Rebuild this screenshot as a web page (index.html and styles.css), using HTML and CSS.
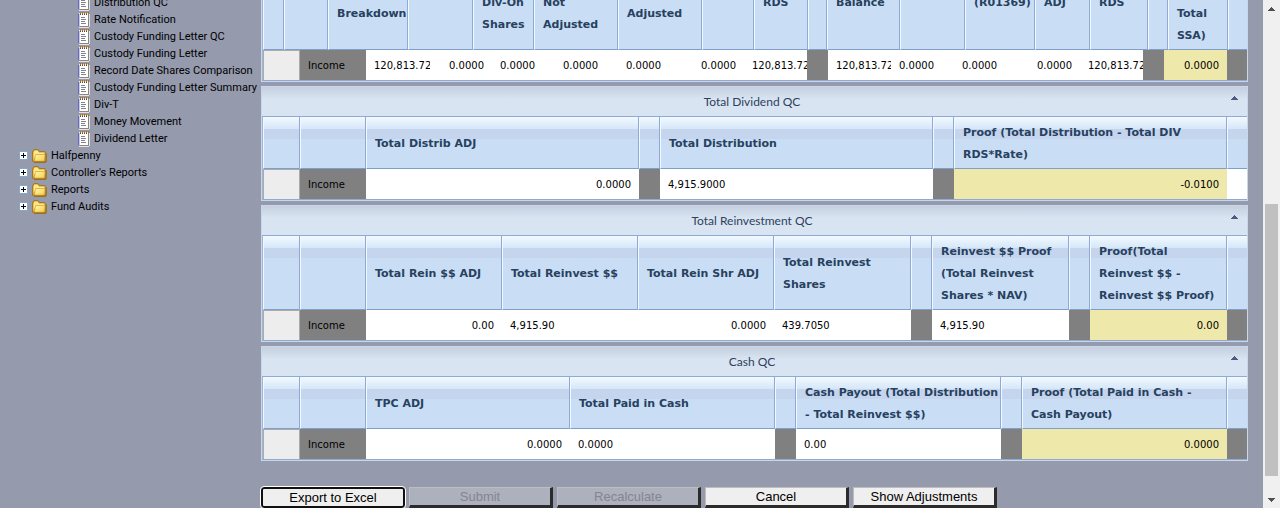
FILE: index.html
```
<!DOCTYPE html>
<html lang="en">
<head>
<meta charset="utf-8">
<title>Distribution QC</title>
<link rel="stylesheet" href="styles.css">
</head>
<body>
<svg width="0" height="0" class="defs" aria-hidden="true">
  <defs>
    <linearGradient id="fg" x1="0" y1="0" x2="1" y2="1"><stop offset="0" stop-color="#fff8a8"/><stop offset="1" stop-color="#f3cf4e"/></linearGradient>
    <symbol id="note" viewBox="0 0 12 16">
      <path d="M1 2h10v12H1z" fill="#fff"/>
      <path d="M0 2h1v12H0z" fill="#6a68b8"/>
      <path d="M1 2h1v12H1z" fill="#c9c9ea"/>
      <path d="M10 2h1v13H2v-1h8z" fill="#8a8580"/>
      <path d="M11 2h1v13h-1zM1 15h10v1H1z" fill="#e6e4e2"/>
      <path d="M1 1h10v1H1z" fill="#f3e8d2"/>
      <path d="M2 0h1v2H2zM4 0h1v2H4zM6 0h1v2H6zM8 0h1v2H8zM10 0h1v2h-1z" fill="#a5742c"/>
      <path d="M2 2h1v1H2zM4 2h1v1H4zM6 2h1v1H6zM8 2h1v1H8z" fill="#5c4a38"/>
      <path d="M3 5h4v1H3zM3 7h5v1H3zM3 9h4v1H3zM3 11h5v1H3z" fill="#7c848c"/>
    </symbol>
    <symbol id="folder" viewBox="0 0 15 14">
      <path d="M0.500 12.500V3L2 0.500h4L7.500 2.500H13v2h1.500v8H1.500z" fill="#c79a3a" stroke="#a87820"/>
      <path d="M1.500 11V3.500L2.500 1.500h3L7 3.500h5.500v1.500H4z" fill="#ffe98c"/>
      <path d="M3.500 5.500H13L12 12H2.500z" fill="url(#fg)" stroke="#d9ab3c" stroke-width=".6"/>
      <path d="M13.500 5h1v8h-1zM2 13h12v1H2z" fill="#94702a"/>
    </symbol>
    <symbol id="plus" viewBox="0 0 9 9">
      <path d="M0 0h9v9H0z" fill="#7fa9cf"/>
      <path d="M1 1h7v7H1z" fill="#fff"/>
      <path d="M2 4h5v1H2zM4 2h1v5H4z" fill="#000"/>
    </symbol>
    <symbol id="up" viewBox="0 0 7 4"><path d="M3 0h1v1h1v1h1v1h1v1H0V3h1V2h1V1h1z" fill="currentColor"/></symbol>
  </defs>
</svg>
<div class="page">
  <nav class="tree" aria-label="Reports">
    <a href="#" class="leaf"><svg class="note"><use href="#note"/></svg>Distribution QC</a>
    <a href="#" class="leaf"><svg class="note"><use href="#note"/></svg>Rate Notification</a>
    <a href="#" class="leaf"><svg class="note"><use href="#note"/></svg>Custody Funding Letter QC</a>
    <a href="#" class="leaf"><svg class="note"><use href="#note"/></svg>Custody Funding Letter</a>
    <a href="#" class="leaf"><svg class="note"><use href="#note"/></svg>Record Date Shares Comparison</a>
    <a href="#" class="leaf"><svg class="note"><use href="#note"/></svg>Custody Funding Letter Summary</a>
    <a href="#" class="leaf"><svg class="note"><use href="#note"/></svg>Div-T</a>
    <a href="#" class="leaf"><svg class="note"><use href="#note"/></svg>Money Movement</a>
    <a href="#" class="leaf"><svg class="note"><use href="#note"/></svg>Dividend Letter</a>
    <a href="#" class="branch"><svg class="plus"><use href="#plus"/></svg><svg class="folder"><use href="#folder"/></svg>Halfpenny</a>
    <a href="#" class="branch"><svg class="plus"><use href="#plus"/></svg><svg class="folder"><use href="#folder"/></svg>Controller's Reports</a>
    <a href="#" class="branch"><svg class="plus"><use href="#plus"/></svg><svg class="folder"><use href="#folder"/></svg>Reports</a>
    <a href="#" class="branch"><svg class="plus"><use href="#plus"/></svg><svg class="folder"><use href="#folder"/></svg>Fund Audits</a>
  </nav>

  <main class="content">
    <section class="panel">
      <table class="grid wide-head">
        <colgroup><col style="width:21px"><col style="width:44px"><col style="width:80px"><col style="width:65px"><col style="width:61px"><col style="width:84px"><col style="width:84px"><col style="width:52px"><col style="width:54px"><col style="width:19px"><col style="width:73px"><col style="width:65px"><col style="width:70px"><col style="width:55px"><col style="width:58px"><col style="width:20px"><col style="width:60px"><col style="width:19px"></colgroup>
        <thead><tr>
          <th></th><th></th><th class="rise-2">Breakdown</th><th></th><th class="rise-1">Div-On<br>Shares</th><th class="rise-1">Not<br>Adjusted</th><th class="rise-2">Adjusted</th><th></th><th class="rise-3">RDS</th><th></th><th class="rise-3">Balance</th><th></th><th class="rise-3">(R01369)</th><th class="rise-3">ADJ</th><th class="rise-3">RDS</th><th></th><th>Total<br>SSA)</th><th></th>
        </tr></thead>
      </table>
      <table class="grid">
        <colgroup><col style="width:37px"><col style="width:66px"><col style="width:64px"><col style="width:62px"><col style="width:51px"><col style="width:63px"><col style="width:63px"><col style="width:75px"><col style="width:63px"><col style="width:21px"><col style="width:63px"><col style="width:51px"><col style="width:63px"><col style="width:75px"><col style="width:63px"><col style="width:21px"><col style="width:63px"><col style="width:20px"></colgroup>
        <tbody><tr>
          <td class="sel"></td><td class="gray">Income</td><td class="flush">120,813.72</td><td class="num">0.0000</td><td class="num">0.0000</td><td class="num">0.0000</td><td class="num">0.0000</td><td class="num">0.0000</td><td class="flush">120,813.72</td><td class="gray"></td><td class="flush">120,813.72</td><td class="num">0.0000</td><td class="num">0.0000</td><td class="num">0.0000</td><td class="flush">120,813.72</td><td class="gray"></td><td class="num proof">0.0000</td><td class="gray"></td>
        </tr></tbody>
      </table>
    </section>

    <section class="panel">
      <header class="title"><h2>Total Dividend QC</h2><button class="toggle" aria-label="Collapse"><svg><use href="#up"/></svg></button></header>
      <table class="grid">
        <colgroup><col style="width:37px"><col style="width:66px"><col style="width:273px"><col style="width:21px"><col style="width:273px"><col style="width:21px"><col style="width:273px"><col style="width:20px"></colgroup>
        <thead><tr><th></th><th></th><th>Total Distrib ADJ</th><th></th><th>Total Distribution</th><th></th><th>Proof (Total Distribution - Total DIV<br>RDS*Rate)</th><th></th></tr></thead>
        <tbody><tr><td class="sel"></td><td class="gray">Income</td><td class="num">0.0000</td><td class="gray"></td><td>4,915.9000</td><td class="gray"></td><td class="num proof">-0.0100</td><td></td></tr></tbody>
      </table>
    </section>

    <section class="panel">
      <header class="title"><h2>Total Reinvestment QC</h2><button class="toggle" aria-label="Collapse"><svg><use href="#up"/></svg></button></header>
      <table class="grid">
        <colgroup><col style="width:37px"><col style="width:66px"><col style="width:136px"><col style="width:136px"><col style="width:136px"><col style="width:137px"><col style="width:21px"><col style="width:137px"><col style="width:21px"><col style="width:137px"><col style="width:20px"></colgroup>
        <thead><tr><th></th><th></th><th>Total Rein $$ ADJ</th><th>Total Reinvest $$</th><th>Total Rein Shr ADJ</th><th>Total Reinvest<br>Shares</th><th></th><th>Reinvest $$ Proof<br>(Total Reinvest<br>Shares * NAV)</th><th></th><th>Proof(Total<br>Reinvest $$ -<br>Reinvest $$ Proof)</th><th></th></tr></thead>
        <tbody><tr><td class="sel"></td><td class="gray">Income</td><td class="num">0.00</td><td>4,915.90</td><td class="num">0.0000</td><td>439.7050</td><td class="gray"></td><td>4,915.90</td><td class="gray"></td><td class="num proof">0.00</td><td class="gray"></td></tr></tbody>
      </table>
    </section>

    <section class="panel">
      <header class="title"><h2>Cash QC</h2><button class="toggle" aria-label="Collapse"><svg><use href="#up"/></svg></button></header>
      <table class="grid">
        <colgroup><col style="width:37px"><col style="width:66px"><col style="width:204px"><col style="width:205px"><col style="width:21px"><col style="width:205px"><col style="width:21px"><col style="width:205px"><col style="width:20px"></colgroup>
        <thead><tr><th></th><th></th><th>TPC ADJ</th><th>Total Paid in Cash</th><th></th><th>Cash Payout (Total Distribution<br>- Total Reinvest $$)</th><th></th><th>Proof (Total Paid in Cash -<br>Cash Payout)</th><th></th></tr></thead>
        <tbody><tr><td class="sel"></td><td class="gray">Income</td><td class="num">0.0000</td><td>0.0000</td><td class="gray"></td><td>0.00</td><td class="gray"></td><td class="num proof">0.0000</td><td class="gray"></td></tr></tbody>
      </table>
    </section>

    <div class="actions">
      <button class="btn primary">Export to Excel</button>
      <button class="btn" disabled>Submit</button>
      <button class="btn" disabled>Recalculate</button>
      <button class="btn">Cancel</button>
      <button class="btn">Show Adjustments</button>
    </div>
  </main>

  <div class="scrollbar" aria-hidden="true">
    <svg class="arrow"><use href="#up"/></svg>
    <div class="track"><div class="thumb"></div></div>
    <svg class="arrow down"><use href="#up"/></svg>
  </div>
</div>
</body>
</html>
```
FILE: styles.css
```
* { box-sizing: border-box; }
body { margin: 0; background: #959aad; }
.defs { position: absolute; }

.page { display: flex; height: 100vh; overflow: hidden; }

/* Navigation tree */
.tree {
  flex: 0 0 261px;
  min-width: 0;
  display: flex;
  flex-direction: column;
  margin-top: -6px;
  font: 11px/17px Roboto, Tahoma, sans-serif;
}
.tree a {
  display: flex;
  align-items: center;
  height: 17px;
  flex: none;
  color: #000;
  text-decoration: none;
  white-space: nowrap;
}
.leaf { padding-left: 78px; gap: 4px; }
.branch { padding-left: 19px; gap: 4px; }
.note { width: 12px; height: 16px; }
.plus { width: 9px; height: 9px; }
.folder { width: 15px; height: 14px; }

/* Panels and grids */
.content {
  flex: 1;
  min-width: 0;
  display: flex;
  flex-direction: column;
  gap: 4px;
  margin: -9px 15px 0 0;
}
.panel { flex: none; border: 1px solid #c8d7ea; background: #d8e4f1; }
.title {
  display: flex;
  align-items: center;
  height: 29px;
  padding: 0 9px 0 11px;
  background: linear-gradient(#c4cfe0, #d8e4f1 12px);
}
.title h2 {
  flex: 1;
  margin: 0;
  text-align: center;
  font: 12px/29px Lato, "Open Sans", sans-serif;
  color: #2f3f5c;
}
.toggle {
  align-self: flex-start;
  padding: 9px 0 0;
  border: 0;
  background: none;
  color: #4b5c80;
  line-height: 0;
}
.toggle svg { width: 7px; height: 4px; }

.grid {
  width: 100%;
  table-layout: fixed;
  border-collapse: separate;
  border-spacing: 0;
  border-left: 1px solid #9db6da;
  font: 10px/13px "DejaVu Sans", Verdana, sans-serif;
}
.title + .grid { border-top: 1px solid #8faad4; }
.grid:last-child { border-bottom: 1px solid #8faad4; }
.grid th {
  padding: 5px 0 2px 8px;
  border-right: 1px solid #8faad4;
  border-left: 1px solid #f2f8ff;
  border-bottom: 1px solid #7f9fcb;
  background: linear-gradient(#f2f9ff, #d5e7f8 12px, #c5d5ee 12px, #c5d5ee 22px, #c9ddf5 22px);
  color: #27415e;
  font-size: 11px;
  font-weight: bold;
  line-height: 22px;
  text-align: left;
  white-space: nowrap;
}
.grid th:last-child { border-right: 0; }
.wide-head th { height: 58px; padding: 0 0 2px 8px; background: #c9ddf5; vertical-align: bottom; }
.wide-head .rise-1 { padding-bottom: 13px; }
.wide-head .rise-2 { padding-bottom: 24px; }
.wide-head .rise-3 { padding-bottom: 35px; }

.grid td {
  height: 30px;
  padding: 0 8px;
  background: #fff;
  color: #000;
  white-space: nowrap;
  overflow: hidden;
}
.grid .sel { background: #ededed; border: 1px solid #ababab; border-bottom: 0; }
.grid .gray { background: #808080; }
.grid .proof { background: #eee8aa; }
.grid .num { text-align: right; }
.grid .flush { padding-right: 0; }

/* Action buttons */
.actions { display: flex; flex: none; gap: 4px; padding-top: 22px; }
.btn {
  width: 144px;
  height: 21px;
  padding: 0;
  border: 1px solid #bdbdbd;
  border-right: 3px solid #2b2b2b;
  border-bottom: 3px solid #2b2b2b;
  background: #efefef;
  color: #000;
  font: 13px/17px "Liberation Sans", Arial, sans-serif;
}
.btn:disabled { background: #adb0bd; color: #84868f; }
.btn.primary {
  padding-bottom: 2px;
  border: 2px solid #101010;
  border-radius: 3px;
  outline: 1px solid #fff;
}

/* Scrollbar */
.scrollbar { flex: 0 0 17px; display: flex; flex-direction: column; align-items: center; background: #f0f0f0; color: #505050; }
.arrow { width: 7px; height: 4px; margin: 7px 0 6px; }
.arrow.down { transform: rotate(180deg); }
.track { flex: 1; width: 13px; display: flex; flex-direction: column; padding: 187px 0 15px; }
.thumb { flex: 1; background: #c0c0c0; }
```
